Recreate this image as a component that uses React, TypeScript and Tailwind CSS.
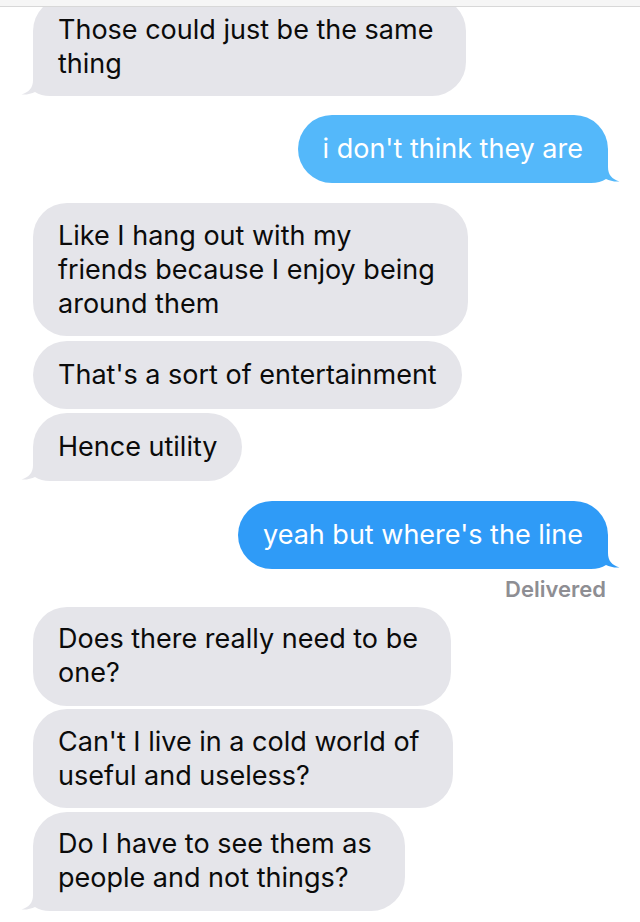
import type { ReactNode } from 'react';

type Side = 'in' | 'out';

interface BubbleProps {
  side: Side;
  tail?: boolean;
  color?: string;
  lines: string[];
}

const GRAY = '#e5e5ea';

// iMessage style tail, drawn for the left side and mirrored for the right
function Tail({ side, color }: { side: Side; color: string }) {
  return (
    <svg
      width="50"
      height="34"
      viewBox="0 0 50 34"
      className={
        side === 'in'
          ? 'absolute -left-[13px] bottom-0'
          : 'absolute -right-[13px] bottom-0 -scale-x-100'
      }
    >
      <path
        d="M13,0 L13,18 C13,26 9,30 1.5,32.5 C7,32.8 11.5,31.8 15,30 C19,32.5 24,34 30,34 L50,34 L50,0 Z"
        fill={color}
      />
    </svg>
  );
}

function Bubble({ side, tail, color, lines }: BubbleProps) {
  const bg = color ?? GRAY;
  const multi = lines.length > 1;
  return (
    <div className={side === 'in' ? 'flex justify-start' : 'flex justify-end'}>
      <div
        className={
          'relative rounded-[34px] pl-[25px] text-[27px] leading-[34px] whitespace-nowrap ' +
          (multi ? 'pr-[33px] py-[15.5px] ' : 'pr-[25px] py-[17px] ') +
          (side === 'in' ? 'text-[#0b0b0b]' : 'text-white')
        }
        style={{ backgroundColor: bg }}
      >
        {tail && <Tail side={side} color={bg} />}
        <span className="relative">
          {lines.map((l, i) => (
            <span key={i} className="block">
              {l}
            </span>
          ))}
        </span>
      </div>
    </div>
  );
}

function Group({ children, className }: { children: ReactNode; className?: string }) {
  return <div className={'flex flex-col gap-1 ' + (className ?? '')}>{children}</div>;
}

export default function App() {
  return (
    <div
      className="w-[640px] h-[922px] overflow-hidden bg-white"
      style={{ fontFamily: 'Inter, "Noto Sans", "Liberation Sans", sans-serif' }}
    >
      {/* top edge of the screenshot */}
      <div className="relative z-10 h-[7px] bg-[#f6f6f6] border-b border-[#d8d8d8]" />

      <div className="flex flex-col pl-[33px] pr-[32px] -mt-[10px]">
        <Group>
          <Bubble side="in" tail lines={['Those could just be the same', 'thing']} />
        </Group>

        <Group className="mt-[19px]">
          <Bubble side="out" tail color="#54b8fa" lines={["i don't think they are"]} />
        </Group>

        <Group className="mt-[20px]">
          <div className="flex flex-col gap-[5px]">
            <Bubble
              side="in"
              lines={['Like I hang out with my', 'friends because I enjoy being', 'around them']}
            />
            <Bubble side="in" lines={["That's a sort of entertainment"]} />
          </div>
          <Bubble side="in" tail lines={['Hence utility']} />
        </Group>

        <Group className="mt-[20px]">
          <Bubble side="out" tail color="#2f9bf7" lines={["yeah but where's the line"]} />
        </Group>

        <div className="mt-[7.5px] mb-[6px] pr-[2px] text-right text-[22px] leading-[24px] font-semibold text-[#8e8e93]">
          Delivered
        </div>

        <Group className="gap-[3.5px]">
          <Bubble side="in" lines={['Does there really need to be', 'one?']} />
          <Bubble side="in" lines={["Can't I live in a cold world of", 'useful and useless?']} />
          <Bubble side="in" tail lines={['Do I have to see them as', 'people and not things?']} />
        </Group>
      </div>
    </div>
  );
}
